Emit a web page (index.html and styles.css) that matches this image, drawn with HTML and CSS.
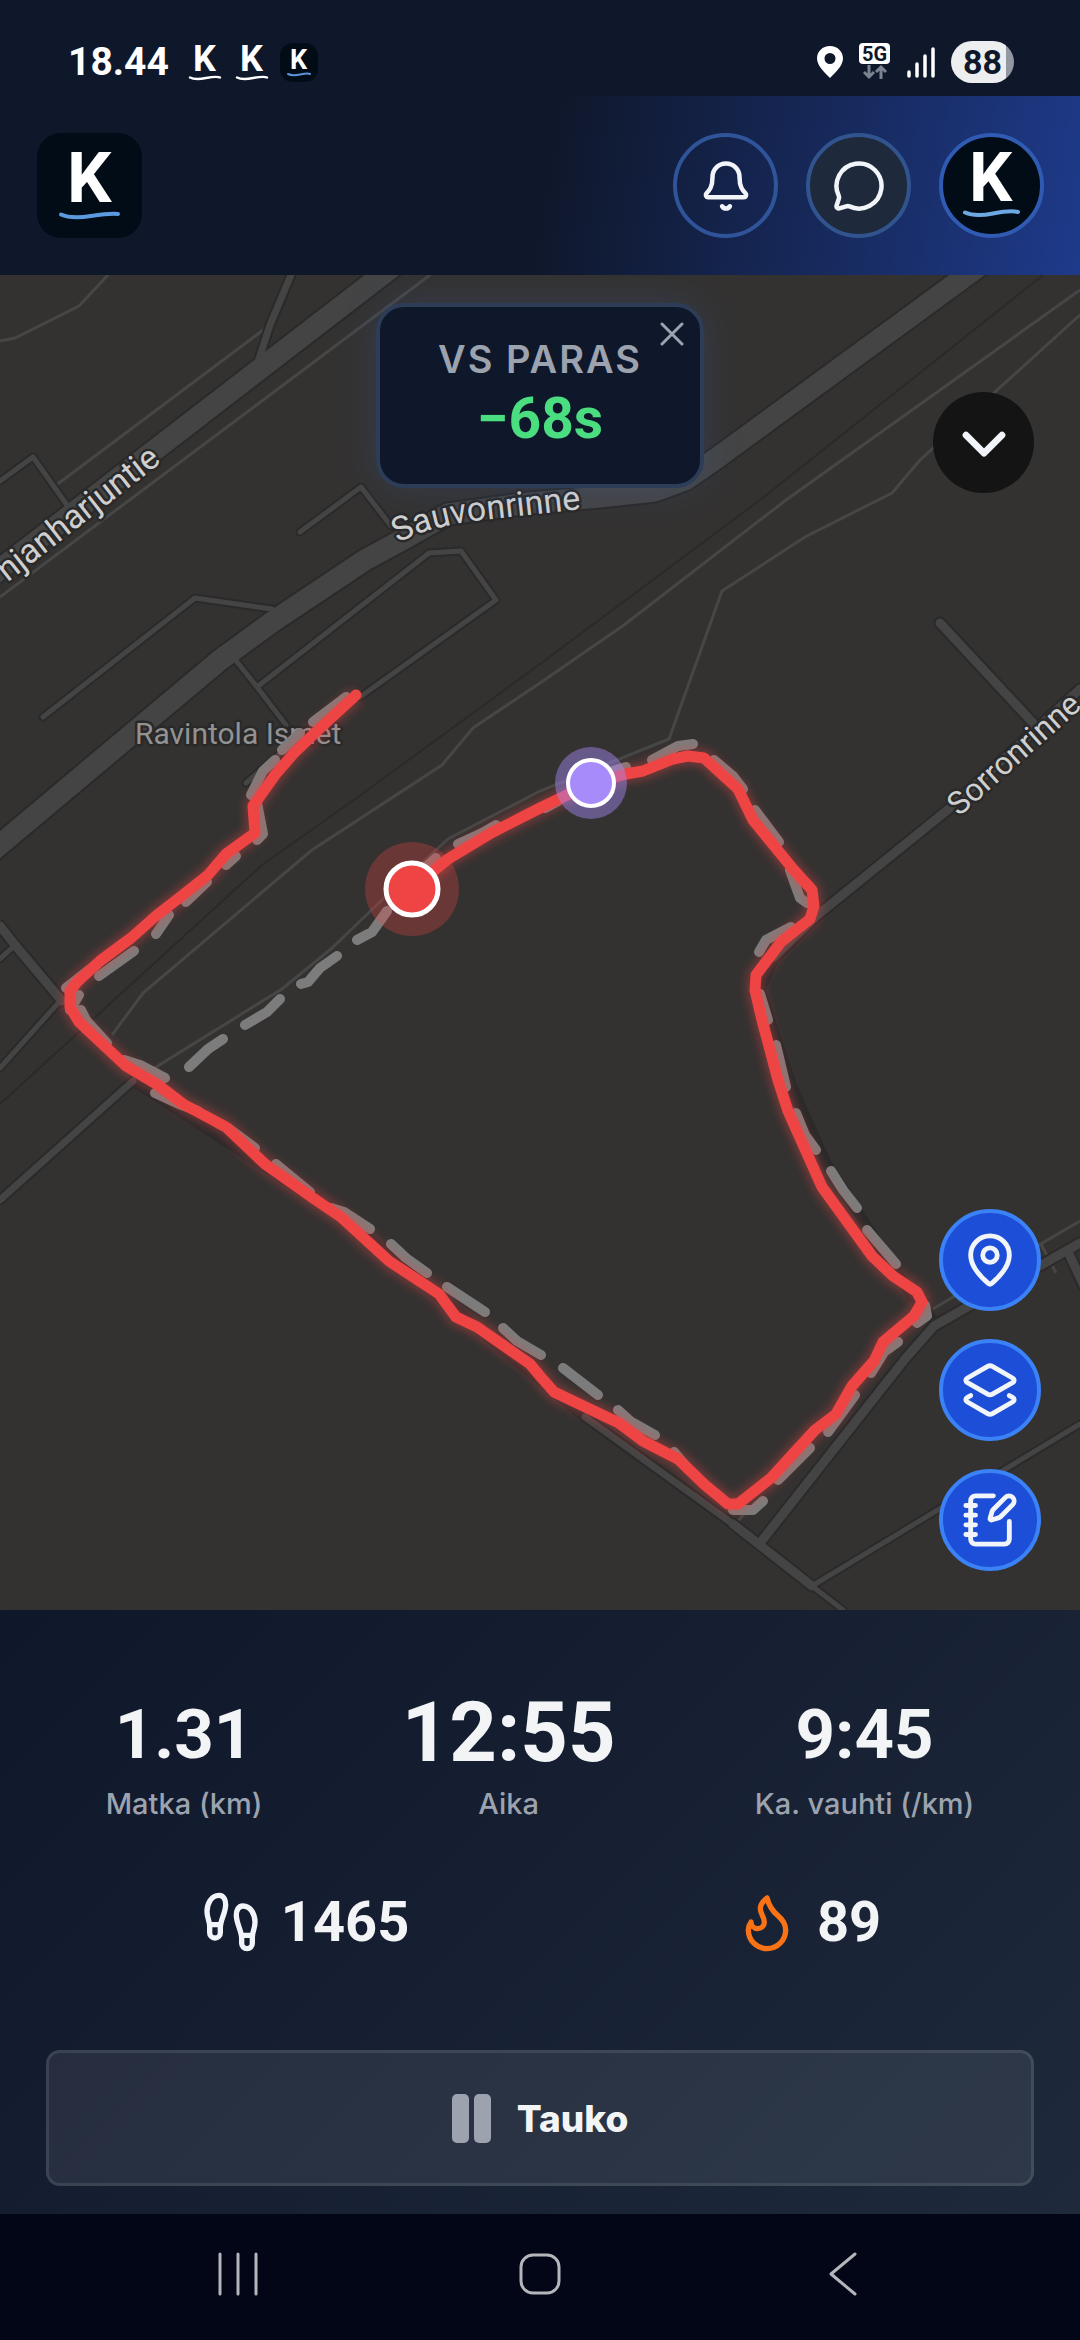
FILE: index.html
```html
<!DOCTYPE html>
<html lang="fi">
<head>
  <meta charset="UTF-8" />
  <meta name="viewport" content="width=device-width, initial-scale=1.0" />
  <title>Lenkki</title>
  <link rel="stylesheet" href="styles.css">
</head>
<body>
  <div class="statusbar">
    <div class="status-left">
      <span class="clock">18.44</span>
      <svg class="notif" viewBox="0 0 38 40"><text x="7" y="29" font-size="36">K</text><path d="M4 35.500Q9 38 20 36T34 35.500" stroke="#fff" stroke-width="2.500"/></svg>
      <svg class="notif" viewBox="0 0 38 40"><text x="7" y="29" font-size="36">K</text><path d="M4 35.500Q9 38 20 36T34 35.500" stroke="#fff" stroke-width="2.500"/></svg>
      <svg class="notif" viewBox="0 0 38 40"><rect width="38" height="39" y="1" rx="13" fill="#020c17"/><text x="10" y="27" font-size="27">K</text><path d="M8 32Q12 34 20 32.500T30 32" stroke="#5b93d6" stroke-width="2"/></svg>
    </div>
    <div class="status-right">
      <svg width="26" height="32" viewBox="0 0 26 32"><path fill="#fff" fill-rule="evenodd" d="M13 0C5.500 0 0 5.500 0 12.500 0 20 9 28 13 32c4-4 13-12 13-19.500C26 5.500 20.500 0 13 0Zm0 7a5.500 5.500 0 1 1 0 11 5.500 5.500 0 0 1 0-11Z"/></svg>
      <svg width="32" height="38" viewBox="0 0 32 38"><rect width="31" height="21" rx="4" fill="#fff"/><text class="net" x="15.500" y="17.500" text-anchor="middle">5G</text><g fill="none" stroke="#7c8290" stroke-width="3"><path d="M10 22v12M5 29l5 5 5-5M22 36V24M17 29l5-5 5 5"/></g></svg>
      <svg width="28" height="32" viewBox="0 0 28 32"><path d="M2 26v4M10 18v12M18 10v20M26 3v27" fill="none" stroke="#fff" stroke-width="3.500" stroke-linecap="round"/></svg>
      <span class="battery">88</span>
    </div>
  </div>

  <header>
    <a class="logo" href="#" aria-label="Etusivu">
      <svg viewBox="0 0 105 105"><text x="30" y="69" font-size="70">K</text><path d="M24 81.500Q34 86 54 83T81 81" stroke="#5b9ade" stroke-width="4"/></svg>
    </a>
    <nav>
      <button class="round" aria-label="Ilmoitukset">
        <svg class="icon" viewBox="0 0 24 24"><path d="M10.268 21a2 2 0 0 0 3.464 0"/><path d="M3.262 15.326A1 1 0 0 0 4 17h16a1 1 0 0 0 .74-1.673C19.410 13.956 18 12.499 18 8A6 6 0 0 0 6 8c0 4.499-1.411 5.956-2.738 7.326"/></svg>
      </button>
      <button class="round chat" aria-label="Viestit">
        <svg class="icon" viewBox="0 0 24 24"><path d="M2.992 16.342a2 2 0 0 1 .094 1.167l-1.065 3.290a1 1 0 0 0 1.236 1.168l3.413-.998a2 2 0 0 1 1.099.092 10 10 0 1 0-4.777-4.719"/></svg>
      </button>
      <button class="round avatar" aria-label="Profiili">
        <svg viewBox="0 0 105 105"><text x="30" y="68" font-size="68">K</text><path d="M26 79.500Q36 84 54 80.500T79 79" stroke="#6ea8e2" stroke-width="4"/></svg>
      </button>
    </nav>
  </header>

  <main class="map">
    <svg class="map-canvas" viewBox="0 275 1080 1335" preserveAspectRatio="xMidYMid slice">
      <defs>
        <filter id="glow" x="-10%" y="-10%" width="120%" height="120%"><feGaussianBlur stdDeviation="5"/></filter>
        <path id="route" d="M356 695L317 731 294 753 275 775 253 806 255 833 226 854 208 875 179 898 157 915 131 938 100 961 77 982 70 991V1007L79 1022 126 1066 158 1085 183 1104 226 1127 265 1164 313 1198 341 1217 389 1261 439 1294 456 1317 477 1327 530 1364 540 1376 554 1392 619 1423 643 1441 678 1459 705 1485 728 1504H738L771 1478 815 1430 836 1414 852 1386 874 1361 883 1342 914 1316 922 1302 917 1292 893 1276 872 1256 822 1187 788 1111 778 1080 762 1020 755 990 756 975 781 942 810 919 814 906 812 890 793 869 753 820 738 789 704 758 688 756 673 759 643 771 626 774 592 783 540 808 491 833 448 859 412 889"/>
        <path id="harjuntie" d="M-120 682L162 462"/>
        <path id="sauvon" d="M398 543Q430 526 482 520L610 506"/>
        <path id="sorron" d="M959 817L1100 692"/>
      </defs>

      <!-- paths and footways -->
      <g class="path dark">
        <path d="M0 1104L262 865 351 802 540 664 760 500 1043 275"/>
      </g>
      <g class="path">
        <path d="M0 341L15 338 79 306 108 275"/>
        <path d="M270 325L55 486"/>
        <path d="M430 275L0 597"/>
        <path d="M1080 290L786 500 624 625 540 683 473 728 442 765 312 850 143 993 112 1035"/>
        <path d="M1080 315L1071 323 920 460 892 493 805 537 722 591 669 739 540 791 448 839 382 900 331 949 282 989 148 1072"/>
        <path d="M933 1309L1039 1245 1080 1221M1041 1244L1056 1273M736 1524L747 1510"/>
      </g>

      <!-- streets, casing first -->
      <g class="casing">
        <path stroke-width="9" d="M0 481L33 457 67 505M300 532L361 487 391 526M43 717L195 598 272 609M234 658L257 687 429 553 461 551 496 600 360 697M257 687L286 725M246 783L290 745M0 959L15 945M0 1068L60 1001M812 1586L1080 1424M812 1586L843 1610"/>
        <path stroke-width="11" d="M291 275L270 325 258 362M0 1200L133 1081 207 1129 340 1215 585 1417 733 1524M760 990L774 957M760 990L791 1085 826 1163 910 1293 933 1321"/>
        <path stroke-width="13" d="M940 623L1034 724M1080 689L950 808 815 917 774 957M0 926L15 945 62 1001M733 1524L812 1586M760 1543L905 1359 934 1326 1080 1243M1070 1256L1084 1286"/>
        <path stroke-width="25" d="M-10 577L382 275 400 261M-10 853L220 660 272 622 365 560 400 541 448 514 530 503 600 497 655 491 685 480 717 458 967 275 985 262"/>
      </g>
      <g class="street">
        <path stroke-width="5" d="M0 481L33 457 67 505M300 532L361 487 391 526M43 717L195 598 272 609M234 658L257 687 429 553 461 551 496 600 360 697M257 687L286 725M246 783L290 745M0 959L15 945M0 1068L60 1001M812 1586L1080 1424M812 1586L843 1610"/>
        <path stroke-width="7" d="M291 275L270 325 258 362M0 1200L133 1081M585 1417L733 1524"/>
        <path stroke-width="9" d="M940 623L1034 724M1080 689L950 808 815 917 774 957M0 926L15 945 62 1001M733 1524L812 1586M760 1543L905 1359 934 1326 1080 1243M1070 1256L1084 1286"/>
        <path stroke-width="21" d="M-10 577L382 275 400 261M-10 853L220 660 272 622 365 560 400 541 448 514 530 503 600 497 655 491 685 480 717 458 967 275 985 262"/>
      </g>

      <!-- labels -->
      <g class="label">
        <text text-anchor="end"><textPath href="#harjuntie" startOffset="100%">njanharjuntie</textPath></text>
        <text><textPath href="#sauvon">Sauvonrinne</textPath></text>
        <text class="minor"><textPath href="#sorron">Sorronrinne</textPath></text>
        <text class="poi" x="135" y="744">Ravintola Ismet</text>
      </g>

      <!-- best run -->
      <path class="ghost" d="M346 697L313 722M300 733L282 750M275 760L263 771 251 795M257 803L263 834 257 840M236 856L226 865M207 882L186 902M169 915L156 934M134 951L99 976M98 963L66 988M79 995L70 1010M81 1010L86 1020 107 1043M124 1060L140 1065 165 1078M155 1093L179 1104 198 1111M219 1124L228 1128 255 1148M276 1164L310 1192M331 1208L344 1212 370 1229M391 1244L406 1258 427 1273M447 1287L485 1312M503 1328L517 1341 541 1355M563 1368L598 1395M618 1410L630 1421 655 1435M674 1452L688 1469M733 1510H753L763 1501M778 1480L810 1448M828 1432L855 1395M871 1373L884 1352 898 1342M917 1323L927 1316 925 1305M896 1264L867 1230M857 1208L843 1190 831 1171M816 1150L805 1135 796 1113M786 1087L776 1045M768 1020L760 994M759 952L766 940 791 927M807 903L800 898 790 870M779 842L755 810M743 789L733 776 714 760M693 744L678 746 652 760M626 767L600 775M558 801L545 808M496 825L482 833 458 844M436 858L425 868M387 911L372 932 357 940M337 956L320 968 308 982 301 984M280 999L267 1012 245 1025M223 1039L208 1049 189 1067"/>
      <use class="route-glow" href="#route" filter="url(#glow)"/>
      <use class="route" href="#route"/>

      <circle cx="591" cy="783" r="36" fill="#a78bfa" opacity=".45"/>
      <circle cx="591" cy="783" r="23" fill="#a78bfa" stroke="#fff" stroke-width="4"/>
      <circle cx="412" cy="889" r="47" fill="#ef4444" opacity=".28"/>
      <circle cx="412" cy="889" r="26" fill="#ef4444" stroke="#fff" stroke-width="5"/>
    </svg>

    <section class="versus">
      <h2>VS PARAS</h2>
      <p>−68s</p>
      <button class="close" aria-label="Sulje"><svg viewBox="0 0 24 24"><path d="M2 2l20 20M22 2L2 22"/></svg></button>
    </section>
    <button class="collapse" aria-label="Pienennä"><svg class="icon" viewBox="0 0 24 24"><path d="m4 8.500 8 8 8-8"/></svg></button>

    <div class="map-tools">
      <button aria-label="Sijainti"><svg class="icon" viewBox="0 0 24 24"><path d="M20 10c0 4.993-5.539 10.193-7.399 11.799a1 1 0 0 1-1.202 0C9.539 20.193 4 14.993 4 10a8 8 0 0 1 16 0"/><circle cx="12" cy="10" r="3"/></svg></button>
      <button aria-label="Karttatasot"><svg class="icon" viewBox="0 0 24 24"><path d="M13 13.740a2 2 0 0 1-2 0L2.500 8.870a1 1 0 0 1 0-1.740L11 2.260a2 2 0 0 1 2 0l8.500 4.870a1 1 0 0 1 0 1.740z"/><path d="m20 14.285 1.500.845a1 1 0 0 1 0 1.740L13 21.740a2 2 0 0 1-2 0l-8.500-4.870a1 1 0 0 1 0-1.740l1.500-.845"/></svg></button>
      <button aria-label="Muistiinpano"><svg class="icon" viewBox="0 0 24 24"><path d="M13.400 2H6a2 2 0 0 0-2 2v16a2 2 0 0 0 2 2h12a2 2 0 0 0 2-2v-7.400"/><path d="M2 6h4M2 10h4M2 14h4M2 18h4"/><path d="M21.378 5.626a1 1 0 1 0-3.004-3.004l-5.010 5.012a2 2 0 0 0-.506.854l-.837 2.870a.5.500 0 0 0 .620.620l2.870-.837a2 2 0 0 0 .854-.506z"/></svg></button>
    </div>
  </main>

  <section class="panel">
    <div class="stats">
      <div class="stat"><strong>1.31</strong><span>Matka (km)</span></div>
      <div class="stat main"><strong>12:55</strong><span>Aika</span></div>
      <div class="stat"><strong>9:45</strong><span>Ka. vauhti (/km)</span></div>
    </div>
    <div class="extras">
      <div class="extra"><svg class="icon" viewBox="0 0 24 24"><path d="M4 16v-2.380C4 11.500 2.970 10.500 3 8c.030-2.720 1.490-6 4.500-6C9.370 2 10 3.800 10 5.500c0 3.110-2 5.660-2 8.680V16a2 2 0 1 1-4 0Z"/><path d="M20 20v-2.380c0-2.120 1.030-3.120 1-5.620-.030-2.720-1.490-6-4.500-6C14.630 6 14 7.800 14 9.500c0 3.110 2 5.660 2 8.680V20a2 2 0 1 0 4 0Z"/><path d="M16 17h4M4 13h4"/></svg>1465</div>
      <div class="extra"><svg class="icon flame" viewBox="0 0 24 24"><path d="M12 3q1 4 4 6.500t3 5.500a1 1 0 0 1-14 0 5 5 0 0 1 1-3 1 1 0 0 0 5 0c0-2-1.500-3-1.500-5q0-2 2.500-4"/></svg>89</div>
    </div>
    <button class="pause">
      <svg viewBox="0 0 39 49"><rect width="17" height="49" rx="5"/><rect x="22" width="17" height="49" rx="5"/></svg>
      Tauko
    </button>
  </section>

  <footer class="navbar">
    <button aria-label="Viimeisimmät"><svg viewBox="0 0 44 44"><path d="M4 2v40M22 2v40M40 2v40"/></svg></button>
    <button aria-label="Koti"><svg viewBox="0 0 44 44"><rect x="3" y="3" width="38" height="38" rx="12"/></svg></button>
    <button aria-label="Takaisin"><svg viewBox="0 0 44 44"><path d="M35 2L11 22l24 20"/></svg></button>
  </footer>
</body>
</html>
```
FILE: styles.css
```css
* { box-sizing: border-box; margin: 0; padding: 0; }
body { min-height: 100vh; display: flex; flex-direction: column; background: #0f172a; color: #f3f4f6; font-family: Roboto, sans-serif; overflow-x: hidden; }
button { border: none; background: none; color: inherit; font: inherit; cursor: pointer; }
svg { display: block; fill: none; }
.icon { width: 54px; height: 54px; stroke: #f1f5f9; stroke-width: 2; stroke-linecap: round; stroke-linejoin: round; }

.statusbar { height: 96px; padding: 28px 66px 0 68px; display: flex; justify-content: space-between; }
.status-left, .status-right { display: flex; align-items: center; height: 68px; color: #fff; }
.status-left { gap: 9px; }
.status-right { gap: 16px; }
.clock { font-size: 39px; font-weight: 700; margin-right: 8px; }
.notif { width: 38px; height: 40px; overflow: visible; }
.notif text, .logo text, .avatar text { fill: #fff; font-weight: 700; }
.notif path, .logo path, .avatar path { stroke-linecap: round; }
.net { fill: #0f172a; font-size: 20px; font-weight: 700; }
.battery { width: 63px; height: 42px; border-radius: 21px; background: linear-gradient(90deg, #eceef0 87%, #9297a1 87%); color: #0f172a; font-size: 34px; font-weight: 700; line-height: 42px; text-align: center; }

header { display: flex; align-items: center; justify-content: space-between; padding: 37px 36px 37px 37px; background: linear-gradient(100deg, #0f172a 50%, #1e3a8a 100%); }
header nav { display: flex; gap: 28px; }
.logo { width: 105px; height: 105px; border-radius: 24px; background: #020c17; }
.round { width: 105px; height: 105px; border: 4px solid #2f5499; border-radius: 50%; display: flex; align-items: center; justify-content: center; }
.chat { background: #1e293b; border-color: #31548f; }
.avatar { background: #020c17; border-color: #305bb3; }
.avatar svg { flex: none; width: 105px; height: 105px; }

.map { flex: 1; min-height: 900px; position: relative; background: #343231; overflow: hidden; }
.map-canvas { position: absolute; width: 100%; height: 100%; }
.path { stroke: #464646; stroke-width: 3; }
.dark { stroke: #2b2a29; stroke-width: 2; }
.casing { stroke: #2b2a2a; stroke-linecap: round; stroke-linejoin: round; }
.street { stroke: #444; stroke-linecap: round; stroke-linejoin: round; }
.label { fill: #cfcfcf; font-size: 34px; stroke: #2a2929; stroke-width: 5px; paint-order: stroke; stroke-linejoin: round; }
.minor { font-size: 32px; }
.poi { fill: #929292; font-size: 30px; }
.ghost { stroke: #7d7c7c; stroke-width: 10; stroke-linecap: round; stroke-linejoin: round; }
.route { stroke: #ef4444; stroke-width: 11; stroke-linecap: round; stroke-linejoin: round; }
.route-glow { stroke: #ef4444; stroke-width: 16; opacity: .4; stroke-linejoin: round; }

.versus { position: absolute; top: 28px; left: 50%; transform: translateX(-50%); width: 328px; height: 185px; padding-top: 30px; text-align: center; background: #0f172a; border: 4px solid #2d3d57; border-radius: 28px; box-shadow: 0 0 40px rgba(59,130,246,0.15); }
.versus h2 { color: #9ca3af; font-family: Inter, sans-serif; font-size: 38px; line-height: 44px; font-weight: 600; letter-spacing: 2px; }
.versus p { color: #4ade80; font-size: 57px; line-height: 76px; font-weight: 700; }
.close { position: absolute; top: 15px; right: 16px; }
.close svg { width: 24px; height: 24px; stroke: #9ca3af; stroke-width: 3; stroke-linecap: round; }
.collapse { position: absolute; top: 117px; right: 46px; width: 101px; height: 101px; border-radius: 50%; background: #141414; display: flex; align-items: center; justify-content: center; }
.collapse svg { stroke-width: 3; }
.map-tools { position: absolute; right: 39px; bottom: 39px; display: flex; flex-direction: column; gap: 28px; }
.map-tools button { width: 102px; height: 102px; border: 4px solid #3b82f6; border-radius: 50%; background: #1d4ed8; display: flex; align-items: center; justify-content: center; }
.map-tools .icon { width: 58px; height: 58px; flex: none; }

.panel { padding: 76px 36px 28px; background: linear-gradient(135deg, #0f172a, #1e293b); }
.stats, .extras { display: flex; justify-content: space-around; }
.stats { align-items: flex-end; }
.stat { display: flex; flex-direction: column; align-items: center; }
.stat strong { font-size: 69px; line-height: 90px; }
.stat.main strong { font-size: 83px; line-height: 94px; }
.stat span { margin-top: 6px; color: #9ca3af; font-family: Inter, sans-serif; font-size: 29px; line-height: 36px; font-weight: 500; }
.extras { margin-top: 68px; }
.extra { display: flex; align-items: center; gap: 18px; height: 64px; font-size: 56px; font-weight: 700; }
.extra .icon { width: 64px; height: 64px; }
.extra .flame { stroke: #f97316; }
.pause { display: flex; align-items: center; justify-content: center; gap: 26px; width: calc(100% - 20px); height: 136px; margin: 96px 10px 0; background: rgba(255,255,255,0.08); border: 3px solid rgba(255,255,255,0.1); border-radius: 14px; font-family: Inter, sans-serif; font-size: 37px; font-weight: 800; }
.pause svg { width: 39px; height: 49px; fill: #9ca3af; }

.navbar { display: flex; align-items: center; height: 126px; padding: 0 87px 6px; background: #020617; }
.navbar button { flex: 1; display: flex; justify-content: center; }
.navbar svg { width: 44px; height: 44px; stroke: #b4b6bb; stroke-width: 3; stroke-linecap: round; stroke-linejoin: round; }
```
